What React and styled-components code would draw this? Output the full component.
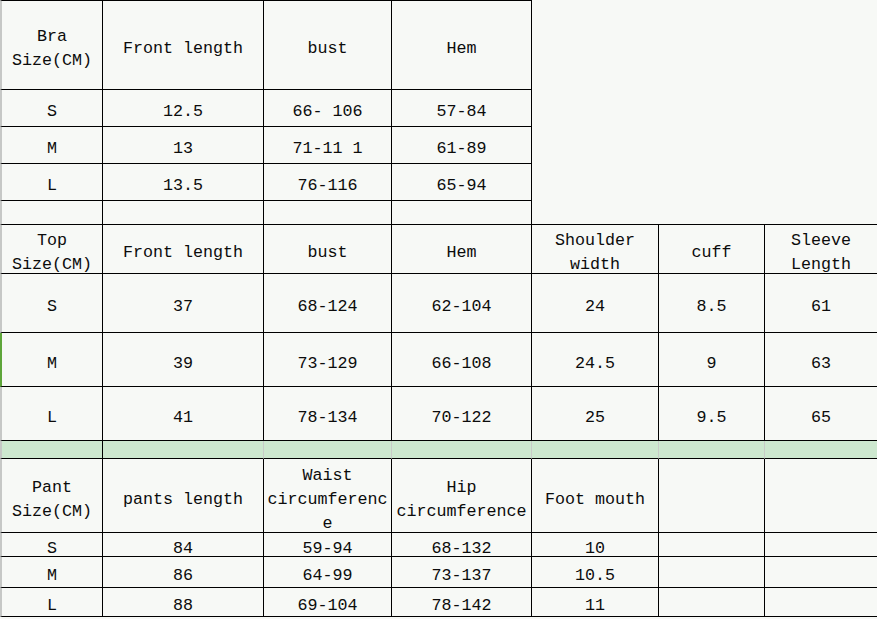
import React from 'react';
import styled, { createGlobalStyle } from 'styled-components';

const COLS = [103, 161, 128, 140, 127, 106, 112];
const ROWS = [90, 37, 37, 37, 24, 49, 59, 54, 54, 18, 74, 24, 31, 29];

const Global = createGlobalStyle`
  html, body { margin: 0; padding: 0; background: #f7f9f6; }
  body { font-family: "Liberation Mono", "DejaVu Sans Mono", monospace; }
`;

const Sheet = styled.div`
  display: grid;
  grid-template-columns: ${COLS.map((c) => c + 'px').join(' ')};
  grid-template-rows: ${ROWS.map((r) => r + 'px').join(' ')};
  width: 877px;
  height: 619px;
  background: #f7f9f6;
  color: #0c0c0c;
  font-size: 16.7px;
  line-height: 24px;
`;

const Cell = styled.div`
  box-sizing: border-box;
  display: flex;
  align-items: center;
  justify-content: center;
  min-width: 0;
  border-right: ${(p) => (p.$last ? 'none' : `1px solid ${p.$soft ? '#c8ccc8' : '#000'}`)};
  border-bottom: 1px solid #000;
  border-top: ${(p) => (p.$top ? '1px solid #000' : 'none')};
  border-left: ${(p) => (p.$first ? `2px solid ${p.$mark ? '#5ea63a' : '#c6c8c6'}` : 'none')};
  background: ${(p) => (p.$fill ? '#cde8cf' : 'transparent')};
`;

const Label = styled.span`
  display: block;
  width: 100%;
  padding-top: 8px;
  text-align: center;
  overflow-wrap: anywhere;
  white-space: pre-wrap;
`;

const Blank = styled.div`
  grid-column: 5 / 8;
  grid-row: 1 / 6;
  border-bottom: 1px solid #000;
`;

const bra = [
  ['Bra Size(CM)', 'Front length', 'bust', 'Hem'],
  ['S', '12.5', '66- 106', '57-84'],
  ['M', '13', '71-11 1', '61-89'],
  ['L', '13.5', '76-116', '65-94'],
  ['', '', '', ''],
];

const top = [
  ['Top Size(CM)', 'Front length', 'bust', 'Hem', 'Shoulder width', 'cuff', 'Sleeve Length'],
  ['S', '37', '68-124', '62-104', '24', '8.5', '61'],
  ['M', '39', '73-129', '66-108', '24.5', '9', '63'],
  ['L', '41', '78-134', '70-122', '25', '9.5', '65'],
];

const pant = [
  ['Pant Size(CM)', 'pants length', 'Waist circumference', 'Hip circumference', 'Foot mouth', '', ''],
  ['S', '84', '59-94', '68-132', '10', '', ''],
  ['M', '86', '64-99', '73-137', '10.5', '', ''],
  ['L', '88', '69-104', '78-142', '11', '', ''],
];

function Row({ cells, rowKey, top: isTop, mark, fill }) {
  return cells.map((text, i) => (
    <Cell
      key={rowKey + '-' + i}
      $first={i === 0}
      $last={i === 6}
      $top={isTop}
      $mark={mark}
      $fill={fill}
      $soft={fill && i > 0}
    >
      <Label>{text}</Label>
    </Cell>
  ));
}

export default function App() {
  return (
    <>
      <Global />
      <Sheet>
        <Blank />
        {bra.map((r, i) => (
          <Row key={'b' + i} rowKey={'b' + i} cells={r} top={i === 0} />
        ))}
        {top.map((r, i) => (
          <Row key={'t' + i} rowKey={'t' + i} cells={r} mark={i === 2} />
        ))}
        <Row rowKey="g" cells={['', '', '', '', '', '', '']} fill />
        {pant.map((r, i) => (
          <Row key={'p' + i} rowKey={'p' + i} cells={r} />
        ))}
      </Sheet>
    </>
  );
}
